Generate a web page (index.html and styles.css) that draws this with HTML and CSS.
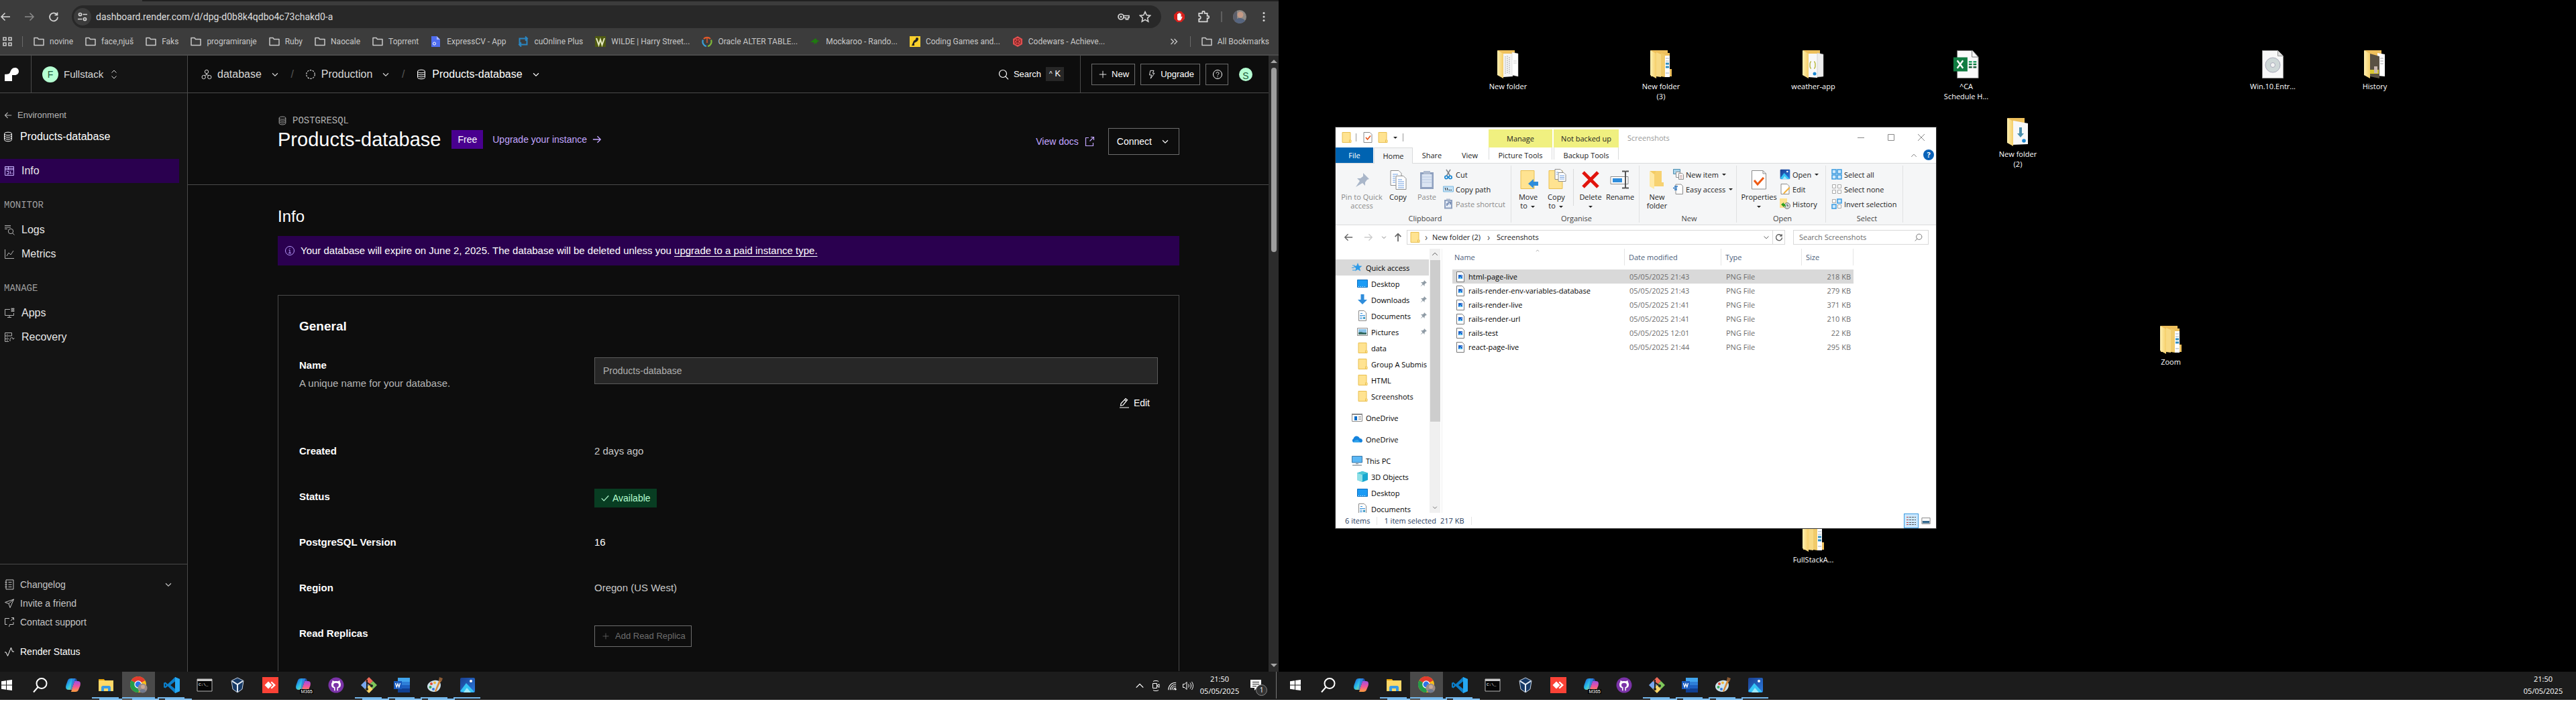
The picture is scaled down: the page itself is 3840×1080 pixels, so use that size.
FILE: index.html
```html
<!DOCTYPE html>
<html lang="en">
<head>
<meta charset="utf-8">
<title>Products-database</title>
<link rel="stylesheet" href="styles.css">
</head>
<body>
<svg class="sprite" aria-hidden="true">
  <defs>
    <linearGradient id="gCop" x1="0" y1="0" x2="1" y2="1"><stop offset="0" stop-color="#1b4fd6"/><stop offset=".5" stop-color="#2bc4e8"/><stop offset="1" stop-color="#e8d33a"/></linearGradient>
    <linearGradient id="gCop2" x1="0" y1="0" x2="0" y2="1"><stop offset="0" stop-color="#a04ee0"/><stop offset=".5" stop-color="#f0549a"/><stop offset="1" stop-color="#ffa03a"/></linearGradient>
    <linearGradient id="gFold" x1="0" y1="0" x2="1" y2="0"><stop offset="0" stop-color="#fff0b0"/><stop offset="1" stop-color="#f5cf6a"/></linearGradient>
    <linearGradient id="gSky" x1="0" y1="0" x2="1" y2="1"><stop offset="0" stop-color="#1a3f8f"/><stop offset="1" stop-color="#2b7be0"/></linearGradient>
  </defs>
  <symbol id="db" viewBox="0 0 16 16"><g fill="none" stroke="currentColor"><ellipse cx="8" cy="3.5" rx="5.5" ry="2.3"/><path d="M2.500 3.500v9c0 1.300 2.500 2.300 5.500 2.300s5.500-1 5.500-2.300v-9M2.500 6.500c0 1.300 2.500 2.300 5.500 2.300s5.500-1 5.500-2.300M2.500 9.500c0 1.300 2.500 2.300 5.500 2.300s5.500-1 5.500-2.300"/></g></symbol>
  <symbol id="chev" viewBox="0 0 16 16"><path d="M3.500 6 8 10.500 12.500 6" fill="none" stroke="currentColor" stroke-width="1.300"/></symbol>
  <symbol id="updown" viewBox="0 0 16 16"><path d="M4.500 5.500 8 2l3.500 3.500M4.500 10.500 8 14l3.500-3.500" fill="none" stroke="currentColor"/></symbol>
  <symbol id="proj" viewBox="0 0 16 16"><g fill="none" stroke="currentColor"><circle cx="8" cy="4" r="2.700"/><circle cx="3.700" cy="12" r="2.700"/><circle cx="12.300" cy="12" r="2.700"/><path d="M8 6.700v2M5 9.500l3-1 3 1"/></g></symbol>
  <symbol id="ring" viewBox="0 0 16 16"><circle cx="8" cy="8" r="6.300" fill="none" stroke="currentColor" stroke-width="1.200" stroke-dasharray="2.500 1.460"/></symbol>
  <symbol id="mag" viewBox="0 0 16 16"><path d="M10.800 10.800 15 15.300" fill="none" stroke="currentColor" stroke-width="1.200"/><circle cx="7" cy="7" r="5.500" fill="none" stroke="currentColor" stroke-width="1.200"/></symbol>
  <symbol id="plus" viewBox="0 0 16 16"><path d="M8 2v12M2 8h12" stroke="currentColor"/></symbol>
  <symbol id="bolt" viewBox="0 0 16 16"><path d="M5.500 1.500h6l-2 4.500h3l-6.500 9 1.500-6H4z" fill="none" stroke="currentColor"/></symbol>
  <symbol id="help" viewBox="0 0 16 16"><g fill="none" stroke="currentColor"><circle cx="8" cy="8" r="6.500"/><path d="M6 6.500c0-2.600 4-2.600 4 0C10 8 8 8 8 9.500M8 11v1.200"/></g></symbol>
  <symbol id="info" viewBox="0 0 16 16"><g fill="none" stroke="currentColor"><circle cx="8" cy="8" r="6.500"/><path d="M6.500 7H8v4.500M6 11.500h4M8 4v1.300"/></g></symbol>
  <symbol id="left" viewBox="0 0 16 16"><path d="M15 8H2M7.500 2.500 2 8l5.500 5.500" fill="none" stroke="currentColor" stroke-width="1.500"/></symbol>
  <symbol id="right" viewBox="0 0 16 16"><path d="M1 8h13M8.500 2.500 14 8l-5.500 5.500" fill="none" stroke="currentColor" stroke-width="1.500"/></symbol>
  <symbol id="up" viewBox="0 0 16 16"><path d="M8 15V2M3 7l5-5 5 5" fill="none" stroke="currentColor" stroke-width="2"/></symbol>
  <symbol id="reload" viewBox="0 0 16 16"><path d="M13 5A6 6 0 1 0 14 8.500M13.500 1.500V5.500h-4" fill="none" stroke="currentColor" stroke-width="1.700"/></symbol>
  <symbol id="tune" viewBox="0 0 16 16"><g fill="none" stroke="currentColor" stroke-width="1.700"><circle cx="4.500" cy="4.500" r="2"/><path d="M8.500 4.500H15M1 11.500h6.500"/><circle cx="11.500" cy="11.500" r="2"/></g></symbol>
  <symbol id="folderline" viewBox="0 0 16 16"><path d="M1 13.500v-11h5l1.500 2H15v9z" fill="none" stroke="currentColor" stroke-width="1.500" stroke-linejoin="round"/></symbol>
  <symbol id="apps4" viewBox="0 0 16 16"><path d="M2 2h4v4H2zM10 2h4v4h-4zM2 10h4v4H2zM10 10h4v4h-4z" fill="none" stroke="currentColor" stroke-width="1.600"/></symbol>
  <symbol id="key" viewBox="0 0 18 12"><g fill="none" stroke="currentColor" stroke-width="1.700"><circle cx="5" cy="6" r="4"/><path d="M9 4.500h8v3h-1.500V10h-3V7.500H9"/></g><circle cx="5" cy="6" r="1.500" fill="currentColor"/></symbol>
  <symbol id="star" viewBox="0 0 16 16"><path d="m8 1.500 2 4.400 4.800.5-3.600 3.200 1 4.700L8 11.900l-4.200 2.400 1-4.700L1.200 6.400 6 5.900z" fill="none" stroke="currentColor" stroke-width="1.400"/></symbol>
  <symbol id="hand" viewBox="0 0 16 16"><path d="M5 0h6l5 5v6l-5 5H5l-5-5V5z" fill="#d8201c"/><path d="M5 8V4h1.400v3.500V2.800h1.400v4.700V2.500h1.400v5V3.500h1.400v5.500l1-1.500 1 .5-1.800 4-1.200 1.500H6.500L5 12z" fill="#fff"/></symbol>
  <symbol id="puzzle" viewBox="0 0 16 16"><path d="M2 3.500h4.500V2a1.500 1.500 0 0 1 3 0v1.500H13V7h1a1.500 1.500 0 0 1 0 3h-1v4.500H2V11c3 0 3-4 0-4z" fill="none" stroke="currentColor" stroke-width="1.600"/></symbol>
  <symbol id="person" viewBox="0 0 20 20"><clipPath id="pc"><circle cx="10" cy="10" r="10"/></clipPath><g clip-path="url(#pc)"><path fill="#8f8a86" d="M0 0h20v20H0z"/><path fill="#5c5f6b" d="M0 0h6v20H0z"/><circle cx="11" cy="7" r="4.500" fill="#c49a86"/><path d="M2 20c0-6 4-8 8-8s9 2 9 8z" fill="#56657f"/></g></symbol>
  <symbol id="dots" viewBox="0 0 16 16"><g fill="currentColor"><circle cx="8" cy="2.500" r="1.500"/><circle cx="8" cy="8" r="1.500"/><circle cx="8" cy="13.500" r="1.500"/></g></symbol>
  <symbol id="dbl" viewBox="0 0 12 12"><path d="m1.500 2 4 4-4 4M6.500 2l4 4-4 4" fill="none" stroke="currentColor" stroke-width="1.400"/></symbol>
  <symbol id="logo" viewBox="0 0 22 20"><path d="M0 10c3-1 6 1 8-3 1.500-4 3-7 7.500-7C19 0 21 2.500 21 5.500S18.500 11 15 11h-4v9H0z" fill="#fff"/></symbol>
  <symbol id="ext" viewBox="0 0 16 16"><path d="M7 2.500H2.500v12h11V10M10 1.500h4.500V6M14.500 1.500 8.500 7.500" fill="none" stroke="currentColor" stroke-width="1.200"/></symbol>
  <symbol id="pen" viewBox="0 0 16 16"><path d="m3 9 7-7.500 2.500 2L6 11.500l-3.500.5zM8.500 3.500l2.500 2M1 15h14" fill="none" stroke="currentColor" stroke-width="1.200"/></symbol>
  <symbol id="check" viewBox="0 0 16 16"><path d="m2 8.500 4 4L14 4" fill="none" stroke="currentColor" stroke-width="1.300"/></symbol>
  <symbol id="iinfo" viewBox="0 0 16 16"><path d="M1.500 1.500h13v13h-13zM1.500 6h13M6.500 1.500V6M1.500 4h13M4 8.500h3v4H4M9.500 8.500v4M12 10.500v2" fill="none" stroke="currentColor"/></symbol>
  <symbol id="ilogs" viewBox="0 0 16 16"><path d="M1 1.500h9M1 4h9M1 6.500h4" stroke="currentColor"/><circle cx="10" cy="10" r="3.700" fill="none" stroke="currentColor"/><path d="m12.500 12.500 3 3" stroke="currentColor"/></symbol>
  <symbol id="imet" viewBox="0 0 16 16"><path d="M1.500 1v13.500H15M4 11l3-5 3 3 4-6" fill="none" stroke="currentColor"/></symbol>
  <symbol id="iapps" viewBox="0 0 16 16"><path d="M9 2.500H1.500v9h13V8M5 14.500h6M8 11.500v3M11 1h1.500v1.500H11zM13.500 1H15v1.500h-1.500zM11 4h1.500v1.500H11zM13.500 4H15v1.500h-1.500z" fill="none" stroke="currentColor"/></symbol>
  <symbol id="irec" viewBox="0 0 16 16"><path d="M7 14.500H1.500v-13h10V6h-10M1.500 10.500H7M4 4h1.500M4 8h1.500M4 12.500h1.500M9 14V11c0-3 5-3 5 0l-1.500-1M14 11l1.500-1.500" fill="none" stroke="currentColor"/></symbol>
  <symbol id="ilog" viewBox="0 0 16 16"><path d="M3 1h11v14H3zM1.500 4.500h3M1.500 8h3M1.500 11.500h3M6.500 4.500h5M6.500 8h5M6.500 11.500h5" fill="none" stroke="currentColor"/></symbol>
  <symbol id="isend" viewBox="0 0 16 16"><path d="M14.500 2 1.500 6.500l5.500 2 2 6zM7 8.500 14.500 2" fill="none" stroke="currentColor"/></symbol>
  <symbol id="isup" viewBox="0 0 16 16"><path d="M8 2.500H1.500v9h3m3 3.500 1-3.500H14V8M11 1.500h3.500V5M14.500 1.500 10 6" fill="none" stroke="currentColor"/></symbol>
  <symbol id="ipulse" viewBox="0 0 16 16"><path d="M1 9h2l2.500 5.500L10.500 2l2 6H15" fill="none" stroke="currentColor"/></symbol>

  <symbol id="tWin" viewBox="0 0 16 16"><path d="M0 2.200 7 1.200v6.300H0zM8 1l8-1v7.500H8zM0 8.500h7v6.300l-7-1zM8 8.500h8V16l-8-1z" fill="#fff"/></symbol>
  <symbol id="tMag" viewBox="0 0 24 24"><circle cx="14" cy="9.500" r="7.500" fill="none" stroke="#fff" stroke-width="2"/><path d="M8.500 15 2 22.500" stroke="#fff" stroke-width="2"/></symbol>
  <symbol id="tCop" viewBox="0 0 24 24"><path d="M9 2h6l-5 17H5c-4 0-4.500-3-3.500-7L4 5c.8-2 2-3 5-3z" fill="url(#gCop)"/><path d="M15 22H9l5-16h5c4 0 4.500 3 3.500 7L20 19c-.8 2-2 3-5 3z" fill="url(#gCop2)"/><path d="M11 2h4c2 0 2.500 2 3 4h-4L9.500 19H8z" fill="#2a6be0" opacity=".7"/></symbol>
  <symbol id="tExp" viewBox="0 0 24 24"><path d="M1 3h8l2 3H1z" fill="#e3a008"/><path d="M1 5h22v16H1z" fill="#ffd867"/><path d="M5 21v-5.500c0-1.500 1-2.500 2.500-2.500h9c1.500 0 2.500 1 2.500 2.500V21h-4v-4H9v4z" fill="#3a9be6"/></symbol>
  <symbol id="tChr" viewBox="0 0 26 26"><circle cx="12" cy="12" r="12" fill="#fbc116"/><path d="M12 12 1.600 6A12 12 0 0 1 22.400 6z" fill="#e33b2e"/><path d="M12 12 1.600 6A12 12 0 0 0 12 24l5-9z" fill="#249b4a"/><circle cx="12" cy="12" r="5.700" fill="#fff"/><circle cx="12" cy="12" r="4.400" fill="#2f74e8"/><circle cx="18.500" cy="17.500" r="7" fill="#9c8d88"/><circle cx="19" cy="15.500" r="3" fill="#c8a898"/><path d="M14 22c1-4 8-4 9.500 0-2 3-7 3-9.500 0z" fill="#70798f"/></symbol>
  <symbol id="tVsc" viewBox="0 0 24 24"><path d="M17 0 6 10.500 2.500 7.500 0 8.800v6.400l2.500 1.300L6 13.500 17 24l7-3V3z" fill="#0b7ec9"/><path d="M17 6.500v11L10 12z" fill="#1c1c1c"/><path d="M17 0l7 3v18l-7 3z" fill="#25a8f2"/><path d="M2 10v4l2-2z" fill="#1c1c1c"/></symbol>
  <symbol id="tVbx" viewBox="0 0 24 24"><path d="m12 1 9 4.500L19 18l-7 5-7-5L3 5.500z" fill="#173a66" stroke="#c9d6e6"/><path d="m4 6 8 5 8-5M12 11v11" fill="none" stroke="#e9eff6" stroke-width="2"/></symbol>
  <symbol id="tAny" viewBox="0 0 24 24"><path d="M0 0h24v24H0z" fill="#fb4236"/><path d="m9 6.500 5.500 5.500L9 17.500 3.500 12zM14 6.500l6 5.500-6 5.500-1.500-1.500 4-4-4-4z" fill="#fff"/></symbol>
  <symbol id="tGh" viewBox="0 0 24 24"><circle cx="12" cy="12" r="11.500" fill="#7b33a8"/><path d="M9 20v-3.500C6 16 4.800 14 5 11c0-1.500.5-2.500 1.200-3.200L6.500 5l3 1.200c1.500-.4 3.500-.4 5 0L17.500 5l.4 2.800C18.500 8.500 19 9.500 19 11c.2 3-1 5-4 5.500V20l-1.500.5V15h-3v5.500z" fill="#fff"/><ellipse cx="12" cy="12" rx="4" ry="3.200" fill="#7b33a8"/></symbol>
  <symbol id="tGit" viewBox="0 0 24 24"><path d="m12 0 6 6-6 6-6-6z" fill="#f06b5a"/><path d="m6 6 6 6-6 6-6-6z" fill="#79a7ee"/><path d="m18 6 6 6-6 6-6-6z" fill="#7fc65a"/><path d="m12 12 6 6-6 6-6-6z" fill="#f7d66a"/><path d="M9 4v14M9 8l7 5" stroke="#222" stroke-width="2"/><circle cx="9" cy="18" r="2" fill="#222"/><circle cx="16" cy="13" r="2" fill="#222"/></symbol>
  <symbol id="tWord" viewBox="0 0 24 24"><path d="M6 1h18v22H6z" fill="#2e7fd8"/><path d="M6 1h18v6H6z" fill="#41a5ee"/><path d="M6 12h18v5H6z" fill="#1d5fbf"/><path d="M6 17h18v6H6z" fill="#103f91"/><path d="M0 6h12v12H0z" fill="#185abd"/><path d="m2.500 9 1.700 6L6 10l1.800 5 1.700-6" fill="none" stroke="#fff" stroke-width="1.300"/></symbol>
  <symbol id="tPaint" viewBox="0 0 24 24"><path d="M11 5c6-1 10 2 10 7s-4 10-10 10S1 18 1 14 5 6 11 5z" fill="#cfe3ee"/><circle cx="7" cy="10" r="2" fill="#e04a3a"/><circle cx="12" cy="8.500" r="2" fill="#f2b53a"/><circle cx="5.500" cy="15" r="2" fill="#3aa85a"/><circle cx="10" cy="18" r="2" fill="#3a78d8"/><path d="m20 1 3 1-9 20-2-1z" fill="#d98a3a"/><path d="m19 0 5 2-2 5-4-2z" fill="#8a5a34"/></symbol>
  <symbol id="tPho" viewBox="0 0 24 24"><rect x="1" y="1" width="22" height="22" rx="2" fill="url(#gSky)"/><path d="m1 21 9-12 12 13c-1 1-20 1-21-1z" fill="#35c5f5"/><path d="m6 23 5-7 6 7z" fill="#9ee8fb"/><circle cx="17" cy="6" r="2" fill="#fff"/></symbol>
  <symbol id="sUp" viewBox="0 0 16 16"><path d="m2 11 6-6 6 6" fill="none" stroke="currentColor" stroke-width="1.500"/></symbol>
  <symbol id="sCam" viewBox="0 0 16 16"><path d="M3.500 4.500h6v7h-6zM9.500 8 13 5.500v5zM4 1.500c2-1.500 6-1.500 8 0M4 14.500c2 1.500 6 1.500 8 0" fill="none" stroke="currentColor"/></symbol>
  <symbol id="sWifi" viewBox="0 0 16 16"><path d="M2 15C2 8 7 2.500 15 2.500M5 15c0-5 4-9.500 10-9.500M8 15c0-4 3-6.500 7-6.500M11 15c0-2 1-3.500 4-3.500" fill="none" stroke="currentColor" stroke-width="1.200"/><circle cx="14" cy="14" r="1.500" fill="currentColor"/></symbol>
  <symbol id="sVol" viewBox="0 0 18 16"><path d="M1.500 5.500h2.500l3-3v11l-3-3H1.500zM9.500 5.500c1 1.500 1 3.500 0 5M12 3.500c2 3 2 6 0 9M14.500 2c2.700 4 2.700 8 0 12" fill="none" stroke="currentColor"/></symbol>
  <symbol id="sNote" viewBox="0 0 18 18"><path d="M1 1h16v12h-6l-4 4v-4H1z" fill="#fff"/><path d="M4 4.500h10M4 7.500h10M4 10.500h6" stroke="#1c1c1c"/></symbol>

  <symbol id="fold" viewBox="0 0 16 16"><path d="M2 .5h12V12h1v3.500H2z" fill="#ffe391" stroke="#e9bf50"/><path d="M12.500 11.500v4" stroke="#e9bf50"/></symbol>
  <symbol id="docChk" viewBox="0 0 16 16"><path d="M2 .5h9l3 3v12H2z" fill="#fff" stroke="#8a8a8a"/><path d="m5 8 2.500 3L12 5.500" fill="none" stroke="#e8551c" stroke-width="1.700"/></symbol>
  <symbol id="pin32" viewBox="0 0 32 32"><path d="m18 6 9 9-3 1-3 4v5l-4-4-10 6 6-9-4-4h5l4-3z" fill="#a9b6c9"/></symbol>
  <symbol id="copy32" viewBox="0 0 32 32"><g fill="#fff" stroke="#8c8c8c"><path d="M5 2.500h12l4 4v18H5z"/><path d="M13 10.500h11l4 4v16H13z"/></g><path d="M8 8h8M8 11h4M8 14h4M8 17h4M8 20h4M16 16h6M16 19h9M16 22h9M16 25h9M16 28h9" stroke="#6d9de0"/></symbol>
  <symbol id="paste32" viewBox="0 0 32 32"><path d="M6 5h20v25H6z" fill="#8ea0bf"/><path d="M8.500 8h15v19h-15z" fill="#dbe5f3"/><path d="M11 3h10v5H11z" fill="#aebbd0"/><path d="M9 12h14M9 16h14M9 20h14" stroke="#b9c9e2"/></symbol>
  <symbol id="cut" viewBox="0 0 16 16"><path d="M5 1l5.500 9M11 1 5.500 10" stroke="#7a7f86" stroke-width="1.500"/><g fill="none" stroke="#1b87d2" stroke-width="1.700"><circle cx="5" cy="12.500" r="2.200"/><circle cx="11" cy="12.500" r="2.200"/></g></symbol>
  <symbol id="path" viewBox="0 0 16 16"><path d="M.5 4h15v8H.5z" fill="#c5e3f8" stroke="#7db8de"/><path d="m3 6 1.500 4M6 6l1.500 4M9 9.500h1.500M11.500 9.500H13" stroke="#222"/></symbol>
  <symbol id="pshort" viewBox="0 0 16 16"><path d="M2 2h12v13.500H2z" fill="#8ea0bf"/><path d="M4 4h8v9.500H4z" fill="#e4ebf5"/><path d="M5 .500h6V3H5z" fill="#aebbd0"/><path d="M6 11V8h3M7 5.500h4V9" fill="none" stroke="#5f78a6" stroke-width="1.500"/></symbol>
  <symbol id="move32" viewBox="0 0 32 32"><path d="M5 2.500h20v27H5z" fill="#ffe391" stroke="#e9bf50"/><path d="M31 19v6h-7v4l-8-7 8-7v4z" fill="#2f8ddb"/></symbol>
  <symbol id="cpto32" viewBox="0 0 32 32"><path d="M5 2.500h20v27H5z" fill="#ffe391" stroke="#e9bf50"/><g fill="#fff" stroke="#8c8c8c"><path d="M14 .5h8l3 3v12H14z"/><path d="M19 5.500h8l3 3v10H19z"/></g><path d="M21 10h7M21 12.500h7M21 15h7M16 5h3M16 8h2" stroke="#6d9de0"/></symbol>
  <symbol id="del32" viewBox="0 0 32 32"><path d="M5 5 27 27M27 5 5 27" stroke="#e1140d" stroke-width="5"/></symbol>
  <symbol id="ren32" viewBox="0 0 32 32"><path d="M2 11.500h26v11H2z" fill="#fff" stroke="#8c8c8c"/><path d="M5 14h14v6H5z" fill="#2f8ddb"/><path d="M19 3.500h4c1 0 1 1 1 2v21c0 1 0 2-1 2h-4M29 3.500h-4c-1 0-1 1-1 2M29 28.500h-4c-1 0-1-1-1-2" fill="none" stroke="#555" stroke-width="2"/></symbol>
  <symbol id="new32" viewBox="0 0 32 32"><path d="M10 3h13v23H10z" fill="#f7d271"/><path d="M23 20h3v6h-3z" fill="#f7d271"/><path d="m5 4 7 3v23l-7-4z" fill="#ffe9a6"/><path d="M5 3h9v2l-2 3z" fill="#f3cb62"/></symbol>
  <symbol id="nitem" viewBox="0 0 16 16"><path d="M.5.5h10v7H.5z" fill="#a8d4ea" stroke="#4f8fb0"/><path d="M4.500 4.500h6v8h-6z" fill="#fff" stroke="#8c8c8c"/><path d="M8.500 6.500h5l2 2v7h-7z" fill="#fff" stroke="#8c8c8c"/><path d="M10 9.500h4M10 11.500h4M10 13.500h4" stroke="#c7a4a4"/></symbol>
  <symbol id="easy" viewBox="0 0 16 16"><path d="M4 1h8l2.500 2.500v12H4z" fill="#fff" stroke="#8c8c8c"/><path d="M2 4h5M0 6.500h6M2 9h4" stroke="#1b6fc2" stroke-width="1.300"/></symbol>
  <symbol id="prop32" viewBox="0 0 32 32"><path d="M5.500 2.500H22l4.500 4.500v23h-21z" fill="#fff" stroke="#8c8c8c"/><path d="M22 2.500V7h4.500" fill="none" stroke="#8c8c8c"/><path d="m9 17 5 6 9-10" fill="none" stroke="#ee5a14" stroke-width="3"/></symbol>
  <symbol id="edit" viewBox="0 0 16 16"><path d="M2 .5h9l3 3v12H2z" fill="#fff" stroke="#8a8a8a"/><path d="m6 13 8-8 1.500 1.500-8 8-2.500 1z" fill="#f3b23c"/></symbol>
  <symbol id="hist" viewBox="0 0 16 16"><path d="M0 0h11v14H0z" fill="#ffe391"/><circle cx="11" cy="11" r="4.500" fill="#d5d9dc" stroke="#777"/><path d="M11 8.500V11h2" stroke="#444" fill="none"/><path d="M2 9l4-3v2c3 0 3 3 3 6-1-2-1-3-3-3v2z" fill="#2ca01c"/></symbol>
  <symbol id="sall" viewBox="0 0 16 16"><path d="M1 1h6v6H1zM9 1h6v6H9zM1 9h6v6H1zM9 9h6v6H9z" fill="#cfe9fc" stroke="#3a9ae0" stroke-width="1.500"/></symbol>
  <symbol id="snone" viewBox="0 0 16 16"><path d="M1.500 1.500h5v5h-5zM9.500 1.500h5v5h-5zM1.500 9.500h5v5h-5zM9.500 9.500h5v5h-5z" fill="#fff" stroke="#a8a8a8"/></symbol>
  <symbol id="sinv" viewBox="0 0 16 16"><path d="M1.500 1.500h5v5h-5zM9.500 9.500h5v5h-5z" fill="#fff" stroke="#a8a8a8"/><path d="M9 1h6v6H9zM1 9h6v6H1z" fill="#cfe9fc" stroke="#3a9ae0" stroke-width="1.500"/></symbol>
  <symbol id="qa" viewBox="0 0 16 16"><path d="m9 1 1.800 4.500 4.700.3-3.600 3 1.200 4.700L9 11l-4 2.500L6.200 9 2.500 6l4.700-.5z" fill="#2e9be8"/><path d="M1 5h4M0 8.500h4M1 12h4" stroke="#2e9be8"/></symbol>
  <symbol id="desk" viewBox="0 0 16 16"><path d="M.5 2.500h15v11H.5z" fill="#1b9bf5" stroke="#0d6fc0"/><path d="M2 12.500h12" stroke="#fff" stroke-dasharray="1 2"/></symbol>
  <symbol id="down" viewBox="0 0 16 16"><path d="M5.500 0h5v8H15l-7 7-7-7h4.500z" fill="#2f8ddb"/></symbol>
  <symbol id="docs" viewBox="0 0 16 16"><path d="M2.500.5h8l3 3v12h-11z" fill="#fff" stroke="#8a8a8a"/><path d="M4 7.500h8M4 10h4M4 12.500h4M5 4.500h3" stroke="#2f8ddb"/><path d="M9 9.500h3v3.500H9z" fill="#4aa0c8"/></symbol>
  <symbol id="pics" viewBox="0 0 16 16"><path d="M.5 2.500h15v11H.5z" fill="#fff" stroke="#8a8a8a"/><path d="M2 4h12v8H2z" fill="#8cc4ea"/><path d="M2 9c4-2 7 1 12 0v3H2z" fill="#35695e"/></symbol>
  <symbol id="odapp" viewBox="0 0 16 16"><path d="M.5 2.500h15v11H.5z" fill="#fff" stroke="#8a8a8a"/><path d="M0 2h16v2H0z" fill="#8a8a8a"/><path d="M4 6h4v6H4z" fill="#0a6cc8"/><path d="M10 6.500h4M10 8.500h4M10 10.500h4" stroke="#999"/></symbol>
  <symbol id="cloud" viewBox="0 0 16 16"><path d="M3 13a3 3 0 0 1-.5-5.500C3 4 7 2 10 4.500c1 .8 1.500 1.500 2 2.500 5 0 5 6 1.500 6z" fill="#1583dc"/><path d="M3 13c-1-3 4-4 6-4l4 4z" fill="#35a5ec"/></symbol>
  <symbol id="pc16" viewBox="0 0 16 16"><path d="M.5 1.500h15v9.500H.5z" fill="#5cb8f5" stroke="#3a78a8"/><path d="M6 12.500h4M1 15h14" stroke="#8f9ba5" stroke-width="1.500"/></symbol>
  <symbol id="cube" viewBox="0 0 16 16"><path d="m8 0 8 2.500V13l-8 3-8-3V2.500z" fill="#19a8d0"/><path d="m0 2.500 8 2.500v11l-8-3z" fill="#8fe0e6"/><path d="m0 2.500L8 0l8 2.500L8 5z" fill="#4cc8d8"/></symbol>
  <symbol id="ppin" viewBox="0 0 12 12"><path d="m7 1 4 4-2 .5-1.500 2V10L5.300 7.500 1.500 10.500l3-4L2 4h2.500L6.500 3z" fill="#8f9ba5"/></symbol>
  <symbol id="png" viewBox="0 0 12 16"><path d="M.5.5h8l3 3v12H.5z" fill="#fff" stroke="#777"/><path d="M3 5h6v6H3z" fill="#1e62c8"/><path d="m3 11 3-3 3 3z" fill="#5bd0f5"/><path d="M7 6h1v1H7z" fill="#fff"/></symbol>
  <symbol id="vlist" viewBox="0 0 16 16"><path d="M1 2.500h3M1 6.500h3M1 10.500h3M1 13.500h3" stroke="#c04040"/><path d="M5 2.500h10M5 6.500h10M5 10.500h10M5 13.500h10" stroke="#555" stroke-dasharray="3 1"/></symbol>
  <symbol id="vthumb" viewBox="0 0 16 16"><path d="M1 3h14v10H1z" fill="#fff" stroke="#777"/><path d="M2 8h12v4H2z" fill="#35698e"/></symbol>

  <symbol id="dFold" viewBox="0 0 32 42"><path d="M1 0h25v36H1z" fill="#eec05c"/><path d="M9 5h14v34l-14 1z" fill="#f4f4f4"/><path d="M22 3l9 2v34l-9-2z" fill="#fff" stroke="#c9c9c9" stroke-width=".5"/><path d="M12 9v26M15 8v26M18 10v25" stroke="#aaa" stroke-dasharray="2 1"/><path d="M24 16h5M24 19h5" stroke="#ccc"/><path d="m0 0 9 5v37L0 37z" fill="url(#gFold)"/></symbol>
  <symbol id="dFold3" viewBox="0 0 32 42"><path d="M1 0h25v4h3v24h3v11H1z" fill="#eec05c"/><path d="m9 3 7 3v34l-7-1z" fill="#f8da84"/><path d="m16 4 6 2v34l-6-1z" fill="#f1cb6a"/><path d="M22 8h7v32h-7z" fill="#fff"/><path d="M23 12h5M23 16h5M23 34h5" stroke="#9ab"/><path d="M23 20h5M23 25h5" stroke="#2f8dc0" stroke-width="3"/><path d="m0 0 9 5v37L0 37z" fill="url(#gFold)"/></symbol>
  <symbol id="dFoldW" viewBox="0 0 32 42"><path d="M1 0h25v36H1z" fill="#eec05c"/><path d="M9 5h13v36l-13-1z" fill="#f8f8f8"/><path d="M22 4l9 2v33l-9 1z" fill="#eee" stroke="#bbb" stroke-width=".5"/><path d="M13 17q-2 0-2 5t2 5M17 17q2 0 2 5t-2 5" fill="none" stroke="#b8b840" stroke-width="1.500"/><circle cx="18" cy="35" r="2.500" fill="#1b87d2"/><path d="m0 0 9 5v37L0 37z" fill="url(#gFold)"/></symbol>
  <symbol id="dFold2" viewBox="0 0 32 42"><path d="M1 0h25v36H1z" fill="#eec05c"/><path d="M9 4l22 4v31l-22 1z" fill="#f8f8f8"/><path d="M18 14h4v9h3l-5 6-5-6h3z" fill="#4a8fae"/><circle cx="25" cy="34" r="2.800" fill="#1b87d2"/><path d="m0 0 9 5v37L0 37z" fill="url(#gFold)"/></symbol>
  <symbol id="dFoldH" viewBox="0 0 32 42"><path d="M1 0h25v36H1z" fill="#eec05c"/><path d="M20 4l11 2v33l-11-1z" fill="#fff"/><path d="M24 12h5M24 16h5M24 20h5" stroke="#aaa"/><path d="M9 5l14 4v33l-14-3z" fill="#5a5244"/><path d="M9 29h13v6H9z" fill="#d8c832"/><path d="M15 24h5v10h-5z" fill="#c8b8b0"/><path d="m0 0 9 5v37L0 37z" fill="url(#gFold)"/></symbol>
  <symbol id="dXls" viewBox="0 0 40 44"><path d="M6 .5h24l9 10v33H6z" fill="#fafafa" stroke="#777"/><path d="M29 .5v10h10" fill="none" stroke="#777"/><path d="M0 11h22v22H0z" fill="#107c41"/><path d="m6 16 9 12M15 16 6 28" stroke="#fff" stroke-width="2.500"/><path d="M24 18h5M31 18h5" stroke="#21a366" stroke-width="2.500"/><path d="M24 22h5M31 22h5" stroke="#107c41" stroke-width="2.500"/><path d="M24 26.500h5M31 26.500h5" stroke="#185c37" stroke-width="2.500"/></symbol>
  <symbol id="dIso" viewBox="0 0 32 42"><path d="M.5.5h23l8 8v33H.5z" fill="#f8f8f8" stroke="#999"/><path d="M23.500.5v8h8" fill="#ddd" stroke="#999"/><circle cx="16" cy="22" r="11" fill="#cfd8d8" stroke="#aab"/><circle cx="16" cy="22" r="3.500" fill="#f4f4f4" stroke="#aab"/></symbol>
</svg>

<div class="screens">
<section class="screen" aria-label="Left display">
  <div class="browser">
    <div class="tabstrip"><div class="tab"></div></div>
    <div class="toolbar">
      <button class="tool" aria-label="Back"><svg class="i16"><use href="#left"/></svg></button>
      <button class="tool dim" aria-label="Forward"><svg class="i16"><use href="#right"/></svg></button>
      <button class="tool" aria-label="Reload"><svg class="i16"><use href="#reload"/></svg></button>
      <div class="omnibox">
        <button class="site" aria-label="Site information"><svg class="i16"><use href="#tune"/></svg></button>
        <input class="url" aria-label="Address" value="dashboard.render.com/d/dpg-d0b8k4qdbo4c73chakd0-a">
        <button class="omni-btn" aria-label="Passwords"><svg class="i18"><use href="#key"/></svg></button>
        <button class="omni-btn" aria-label="Bookmark"><svg class="i18"><use href="#star"/></svg></button>
      </div>
      <button class="tool" aria-label="Ad blocker"><svg class="i16"><use href="#hand"/></svg></button>
      <button class="tool" aria-label="Extensions"><svg class="i18"><use href="#puzzle"/></svg></button>
      <span class="tool-sep"></span>
      <button class="tool" aria-label="Profile"><svg class="i20"><use href="#person"/></svg></button>
      <button class="tool" aria-label="Menu"><svg class="i16"><use href="#dots"/></svg></button>
    </div>
    <nav class="bookmarks" aria-label="Bookmarks">
      <button class="apps-btn" aria-label="Apps"><svg class="i16"><use href="#apps4"/></svg></button>
      <span class="bm-sep"></span>
      <a href="#"><svg class="i16"><use href="#folderline"/></svg>novine</a>
      <a href="#"><svg class="i16"><use href="#folderline"/></svg>face,njuš</a>
      <a href="#"><svg class="i16"><use href="#folderline"/></svg>Faks</a>
      <a href="#"><svg class="i16"><use href="#folderline"/></svg>programiranje</a>
      <a href="#"><svg class="i16"><use href="#folderline"/></svg>Ruby</a>
      <a href="#"><svg class="i16"><use href="#folderline"/></svg>Naocale</a>
      <a href="#"><svg class="i16"><use href="#folderline"/></svg>Toprrent</a>
      <a href="#"><svg class="i16" viewBox="0 0 16 16"><path d="M1 0h8l5 5v11H1z" fill="#4f6df0"/><path d="M9 0v5h5z" fill="#a9b8ff"/><circle cx="5.500" cy="11" r="2" fill="none" stroke="#fff"/></svg>ExpressCV - App</a>
      <a href="#"><svg class="i16" viewBox="0 0 16 16"><path d="M2.500 13V3.500H14M13.500 3v9.500H2M11 .5l3 3-3 3M5 15.500l-3-3 3-3" fill="none" stroke="#2a86c2" stroke-width="2"/></svg>cuOnline Plus</a>
      <a href="#"><svg class="i16" viewBox="0 0 16 16"><path d="M0 0h16v16H0z" fill="#4f5a10"/><path d="m2 3 3.500 10L8 5l2.500 8L14 3" fill="none" stroke="#e4e8c0" stroke-width="2"/></svg>WILDE | Harry Street...</a>
      <a href="#"><svg class="i16" viewBox="0 0 16 16"><g fill="none" stroke-width="2.200"><path d="M3 4a7 7 0 0 1 10 0" stroke="#e0592a"/><path d="M2 5.500A7 7 0 0 0 7 15" stroke="#3aa0d8"/><path d="M14 5.500A7 7 0 0 1 9 15" stroke="#7fb83a"/><path d="M8 1v9" stroke="#e0592a" stroke-width="1.500"/></g></svg>Oracle ALTER TABLE...</a>
      <a href="#"><svg class="i16" viewBox="0 0 16 16"><path d="M1 9 6 5l3-2 2 3 4 1-3 1-2 2 1 2-3-2-1 3-1-4-5 0z" fill="#1f7a10"/></svg>Mockaroo - Rando...</a>
      <a href="#"><svg class="i16" viewBox="0 0 16 16"><path d="M0 0h16v16H0z" fill="#f8cf2c"/><path d="m3 14 3-7 4-3 3-1-1 4-3 2-2 1v4z" fill="#222"/><circle cx="11" cy="4" r="2" fill="#222"/></svg>Coding Games and...</a>
      <a href="#"><svg class="i16" viewBox="0 0 16 16"><path d="m8 0 7 4v8l-7 4-7-4V4z" fill="#e05050"/><path d="M8 3v5M3.500 6 8 8M3.500 11 8 8M8 13V8M12.500 11 8 8M12.500 5 8 8" stroke="#7a1f1f"/><circle cx="8" cy="8" r="4.500" fill="none" stroke="#7a1f1f"/></svg>Codewars - Achieve...</a>
      <span class="grow"></span>
      <button class="more" aria-label="More bookmarks"><svg class="i12"><use href="#dbl"/></svg></button>
      <span class="bm-sep"></span>
      <a href="#"><svg class="i16"><use href="#folderline"/></svg>All Bookmarks</a>
    </nav>
    <div class="viewport">
      <div class="app">
        <header class="topbar">
          <a class="brand" href="#" aria-label="Render"><svg class="logo"><use href="#logo"/></svg></a>
          <button class="workspace"><span class="avatar a24">F</span>Fullstack<svg class="i16"><use href="#updown"/></svg></button>
          <nav class="crumbs" aria-label="Breadcrumb">
            <button class="crumb"><svg class="i16"><use href="#proj"/></svg><span>database</span><svg class="i14"><use href="#chev"/></svg></button>
            <span class="slash">/</span>
            <button class="crumb"><svg class="i16"><use href="#ring"/></svg><span>Production</span><svg class="i14"><use href="#chev"/></svg></button>
            <span class="slash">/</span>
            <button class="crumb here"><svg class="i16"><use href="#db"/></svg><span>Products-database</span><svg class="i14"><use href="#chev"/></svg></button>
          </nav>
          <button class="search"><svg class="i16"><use href="#mag"/></svg>Search <kbd><small>^</small> K</kbd></button>
          <div class="actions">
            <button class="btn sm"><svg class="i14"><use href="#plus"/></svg>New</button>
            <button class="btn sm"><svg class="i14"><use href="#bolt"/></svg>Upgrade</button>
            <button class="btn sm sq" aria-label="Help"><svg class="i16"><use href="#help"/></svg></button>
            <span class="avatar a20">S</span>
          </div>
        </header>
        <div class="columns">
          <aside class="sidebar">
            <a class="backlink" href="#"><svg class="i12"><use href="#left"/></svg>Environment</a>
            <div class="service"><svg class="i16"><use href="#db"/></svg>Products-database</div>
            <nav class="menu">
              <a class="item active" href="#"><svg class="i16"><use href="#iinfo"/></svg>Info</a>
              <h2>MONITOR</h2>
              <a class="item" href="#"><svg class="i16"><use href="#ilogs"/></svg>Logs</a>
              <a class="item" href="#"><svg class="i16"><use href="#imet"/></svg>Metrics</a>
              <h2>MANAGE</h2>
              <a class="item" href="#"><svg class="i16"><use href="#iapps"/></svg>Apps</a>
              <a class="item" href="#"><svg class="i16"><use href="#irec"/></svg>Recovery</a>
            </nav>
            <div class="side-foot">
              <button class="foot"><svg class="i16"><use href="#ilog"/></svg>Changelog<svg class="i14 end"><use href="#chev"/></svg></button>
              <a class="foot" href="#"><svg class="i16"><use href="#isend"/></svg>Invite a friend</a>
              <a class="foot" href="#"><svg class="i16"><use href="#isup"/></svg>Contact support</a>
              <a class="foot status-link" href="#"><svg class="i16"><use href="#ipulse"/></svg>Render Status</a>
            </div>
          </aside>
          <main class="main">
            <div class="page-head">
              <div>
                <div class="kind"><svg class="i14"><use href="#db"/></svg>POSTGRESQL</div>
                <div class="title-row"><h1>Products-database</h1><span class="plan">Free</span><a class="violet" href="#">Upgrade your instance<svg class="i14"><use href="#right"/></svg></a></div>
              </div>
              <div class="head-actions"><a class="violet" href="#">View docs<svg class="i16"><use href="#ext"/></svg></a><button class="btn lg">Connect<svg class="i14"><use href="#chev"/></svg></button></div>
            </div>
            <div class="content">
              <h2 class="section-title">Info</h2>
              <div class="banner"><svg class="i16"><use href="#info"/></svg><p>Your database will expire on June 2, 2025. The database will be deleted unless you <a href="#">upgrade to a paid instance type.</a></p></div>
              <section class="card">
                <h3>General</h3>
                <div class="field name-field">
                  <div><label for="dbname">Name</label><p class="hint">A unique name for your database.</p></div>
                  <div class="name-side"><input id="dbname" class="text" value="Products-database" readonly><button class="edit"><svg class="i16"><use href="#pen"/></svg>Edit</button></div>
                </div>
                <div class="field"><span class="k">Created</span><span class="v">2 days ago</span></div>
                <div class="field"><span class="k">Status</span><span class="v"><span class="ok"><svg class="i14"><use href="#check"/></svg>Available</span></span></div>
                <div class="field"><span class="k">PostgreSQL Version</span><span class="v bright">16</span></div>
                <div class="field"><span class="k">Region</span><span class="v">Oregon (US West)</span></div>
                <div class="field"><span class="k">Read Replicas</span><span class="v"><button class="btn sm off" disabled><svg class="i12"><use href="#plus"/></svg>Add Read Replica</button></span></div>
              </section>
            </div>
          </main>
        </div>
      </div>
      <div class="scroll dark-scroll"><span class="arr up-arr"></span><span class="thumb"></span><span class="arr down-arr"></span></div>
    </div>
  </div>
  <div class="taskbar left-bar">
    <button class="task start" aria-label="Start"><svg class="i16"><use href="#tWin"/></svg></button>
    <button class="task" aria-label="Search"><svg class="i24"><use href="#tMag"/></svg></button>
    <button class="task" aria-label="Copilot"><svg class="i24"><use href="#tCop"/></svg></button>
    <button class="task run many" aria-label="File Explorer"><svg class="i24"><use href="#tExp"/></svg></button>
    <button class="task run many on" aria-label="Chrome"><svg class="i26"><use href="#tChr"/></svg></button>
    <button class="task run many" aria-label="Visual Studio Code"><svg class="i24"><use href="#tVsc"/></svg></button>
    <button class="task" aria-label="Command Prompt"><svg class="i24" viewBox="0 0 24 24"><path d="M1 3h22v18H1z" fill="#050505" stroke="#b8b8b8"/><path d="M1 3h22v3H1z" fill="#c8c8c8"/><text class="prompt" x="3" y="13">C:\_</text></svg></button>
    <button class="task" aria-label="VirtualBox"><svg class="i24"><use href="#tVbx"/></svg></button>
    <button class="task" aria-label="AnyDesk"><svg class="i24"><use href="#tAny"/></svg></button>
    <button class="task" aria-label="Microsoft 365"><svg class="i24"><use href="#tCop"/></svg><span class="m365">M365</span></button>
    <button class="task" aria-label="GitHub Desktop"><svg class="i24"><use href="#tGh"/></svg></button>
    <button class="task run many" aria-label="Git"><svg class="i24"><use href="#tGit"/></svg></button>
    <button class="task run many" aria-label="Word"><svg class="i24"><use href="#tWord"/></svg></button>
    <button class="task run many" aria-label="Paint"><svg class="i24"><use href="#tPaint"/></svg></button>
    <button class="task run" aria-label="Photos"><svg class="i24"><use href="#tPho"/></svg></button>
    <span class="grow"></span>
    <button class="tray" aria-label="Hidden icons"><svg class="i14"><use href="#sUp"/></svg></button>
    <button class="tray" aria-label="Meet now"><svg class="i16"><use href="#sCam"/></svg></button>
    <button class="tray" aria-label="Network"><svg class="i14"><use href="#sWifi"/></svg></button>
    <button class="tray" aria-label="Volume"><svg class="i18"><use href="#sVol"/></svg></button>
    <div class="clock">21:50<br>05/05/2025</div>
    <button class="notify" aria-label="Notifications"><svg class="i18"><use href="#sNote"/></svg><span class="badge">1</span></button>
    <span class="peek"></span>
  </div>
</section>

<section class="screen" aria-label="Right display">
  <div class="desktop">
    <div class="shortcut" style="left:305px;top:75px"><svg><use href="#dFold"/></svg>New folder</div>
    <div class="shortcut" style="left:533px;top:75px"><svg><use href="#dFold3"/></svg>New folder<br>(3)</div>
    <div class="shortcut" style="left:760px;top:75px"><svg><use href="#dFoldW"/></svg>weather-app</div>
    <div class="shortcut" style="left:988px;top:75px"><svg><use href="#dXls"/></svg>^CA<br>Schedule H...</div>
    <div class="shortcut" style="left:1065px;top:176px"><svg><use href="#dFold2"/></svg>New folder<br>(2)</div>
    <div class="shortcut" style="left:1445px;top:75px"><svg><use href="#dIso"/></svg>Win.10.Entr...</div>
    <div class="shortcut" style="left:1597px;top:75px"><svg><use href="#dFoldH"/></svg>History</div>
    <div class="shortcut" style="left:1293px;top:486px"><svg><use href="#dFold3"/></svg>Zoom</div>
    <div class="shortcut" style="left:760px;top:781px"><svg><use href="#dFold3"/></svg>FullStackA...</div>

    <div class="window">
      <div class="titlebar">
        <div class="quick">
          <svg class="i16"><use href="#fold"/></svg><i></i><svg class="i16"><use href="#docChk"/></svg><svg class="i16"><use href="#fold"/></svg><span class="tri"></span><i></i>
        </div>
        <div class="ctx">Manage</div><div class="ctx">Not backed up</div>
        <div class="wtitle">Screenshots</div>
        <button class="wbtn" aria-label="Minimise"><svg class="i12" viewBox="0 0 12 12"><path d="M1 6.500h10" stroke="#888"/></svg></button>
        <button class="wbtn" aria-label="Maximise"><svg class="i12" viewBox="0 0 12 12"><path d="M1.500 1.500h9v9h-9z" fill="none" stroke="#888"/></svg></button>
        <button class="wbtn" aria-label="Close"><svg class="i12" viewBox="0 0 12 12"><path d="m1 1 10 10M11 1 1 11" stroke="#888"/></svg></button>
      </div>
      <div class="tabs">
        <button class="wtab file">File</button><button class="wtab home">Home</button><button class="wtab share">Share</button><button class="wtab view">View</button>
        <button class="wtab tools t1">Picture Tools</button><button class="wtab tools t2">Backup Tools</button>
        <span class="grow"></span>
        <button class="collapse" aria-label="Collapse ribbon"><svg class="i10"><use href="#sUp"/></svg></button>
        <button class="qmark" aria-label="Help">?</button>
      </div>
      <div class="ribbon">
        <div class="group g1"><div class="gbody">
          <button class="big w66 off"><svg class="i32"><use href="#pin32"/></svg>Pin to Quick access</button>
          <button class="big w42"><svg class="i32"><use href="#copy32"/></svg>Copy</button>
          <button class="big w44 off"><svg class="i32"><use href="#paste32"/></svg>Paste</button>
          <div class="smalls"><button><svg class="i16"><use href="#cut"/></svg>Cut</button><button><svg class="i16"><use href="#path"/></svg>Copy path</button><button class="off"><svg class="i16"><use href="#pshort"/></svg>Paste shortcut</button></div>
        </div><div class="glabel">Clipboard</div></div>
        <div class="group g2"><div class="gbody">
          <button class="big w42"><svg class="i32"><use href="#move32"/></svg>Move<span>to <b class="tri"></b></span></button>
          <button class="big w42"><svg class="i32"><use href="#cpto32"/></svg>Copy<span>to <b class="tri"></b></span></button>
          <span class="gsep"></span>
          <button class="big w42"><svg class="i32"><use href="#del32"/></svg>Delete<span><b class="tri"></b></span></button>
          <button class="big w46"><svg class="i32"><use href="#ren32"/></svg>Rename</button>
        </div><div class="glabel">Organise</div></div>
        <div class="group g3"><div class="gbody">
          <button class="big w44"><svg class="i32"><use href="#new32"/></svg>New folder</button>
          <div class="smalls"><button><svg class="i16"><use href="#nitem"/></svg>New item <b class="tri"></b></button><button><svg class="i16"><use href="#easy"/></svg>Easy access <b class="tri"></b></button></div>
        </div><div class="glabel">New</div></div>
        <div class="group g4"><div class="gbody">
          <button class="big w58"><svg class="i32"><use href="#prop32"/></svg>Properties<span><b class="tri"></b></span></button>
          <div class="smalls"><button><svg class="i16"><use href="#tPho"/></svg>Open <b class="tri"></b></button><button><svg class="i16"><use href="#edit"/></svg>Edit</button><button><svg class="i16"><use href="#hist"/></svg>History</button></div>
        </div><div class="glabel">Open</div></div>
        <div class="group g5"><div class="gbody">
          <div class="smalls"><button><svg class="i16"><use href="#sall"/></svg>Select all</button><button><svg class="i16"><use href="#snone"/></svg>Select none</button><button><svg class="i16"><use href="#sinv"/></svg>Invert selection</button></div>
        </div><div class="glabel">Select</div></div>
      </div>
      <div class="addrrow">
        <button class="nav" aria-label="Back"><svg class="i14"><use href="#left"/></svg></button>
        <button class="nav faint" aria-label="Forward"><svg class="i14"><use href="#right"/></svg></button>
        <button class="nav slim" aria-label="Recent"><svg class="i10"><use href="#chev"/></svg></button>
        <button class="nav slim2" aria-label="Up"><svg class="i14"><use href="#up"/></svg></button>
        <div class="addr"><svg class="i16"><use href="#fold"/></svg><span class="gt">›</span><span>New folder (2)</span><span class="gt">›</span><span>Screenshots</span><span class="grow"></span><button aria-label="Previous locations"><svg class="i12"><use href="#chev"/></svg></button><button class="refresh" aria-label="Refresh"><svg class="i12"><use href="#reload"/></svg></button></div>
        <div class="find"><input aria-label="Search Screenshots" placeholder="Search Screenshots"><svg class="i12 flip"><use href="#mag"/></svg></div>
      </div>
      <div class="panes">
        <nav class="tree" aria-label="Folders">
          <a href="#" class="root sel"><svg class="i16"><use href="#qa"/></svg>Quick access</a>
          <a href="#"><svg class="i16"><use href="#desk"/></svg>Desktop<svg class="i12 end"><use href="#ppin"/></svg></a>
          <a href="#"><svg class="i16"><use href="#down"/></svg>Downloads<svg class="i12 end"><use href="#ppin"/></svg></a>
          <a href="#"><svg class="i16"><use href="#docs"/></svg>Documents<svg class="i12 end"><use href="#ppin"/></svg></a>
          <a href="#"><svg class="i16"><use href="#pics"/></svg>Pictures<svg class="i12 end"><use href="#ppin"/></svg></a>
          <a href="#"><svg class="i16"><use href="#fold"/></svg>data</a>
          <a href="#"><svg class="i16"><use href="#fold"/></svg>Group A Submis</a>
          <a href="#"><svg class="i16"><use href="#fold"/></svg>HTML</a>
          <a href="#"><svg class="i16"><use href="#fold"/></svg>Screenshots</a>
          <a href="#" class="root gap"><svg class="i16"><use href="#odapp"/></svg>OneDrive</a>
          <a href="#" class="root gap"><svg class="i16"><use href="#cloud"/></svg>OneDrive</a>
          <a href="#" class="root gap"><svg class="i16"><use href="#pc16"/></svg>This PC</a>
          <a href="#"><svg class="i16"><use href="#cube"/></svg>3D Objects</a>
          <a href="#"><svg class="i16"><use href="#desk"/></svg>Desktop</a>
          <a href="#"><svg class="i16"><use href="#docs"/></svg>Documents</a>
        </nav>
        <div class="scroll light-scroll"><svg class="i10"><use href="#sUp"/></svg><span class="thumb"></span><svg class="i10"><use href="#chev"/></svg></div>
        <div class="list">
          <table>
            <colgroup><col class="c1"><col class="c2"><col class="c3"><col class="c4"></colgroup>
            <thead><tr><th>Name<svg class="sort"><use href="#sUp"/></svg></th><th>Date modified</th><th>Type</th><th>Size</th></tr></thead>
            <tbody>
              <tr class="sel"><td><svg><use href="#png"/></svg>html-page-live</td><td>05/05/2025 21:43</td><td>PNG File</td><td>218 KB</td></tr>
              <tr><td><svg><use href="#png"/></svg>rails-render-env-variables-database</td><td>05/05/2025 21:43</td><td>PNG File</td><td>279 KB</td></tr>
              <tr><td><svg><use href="#png"/></svg>rails-render-live</td><td>05/05/2025 21:41</td><td>PNG File</td><td>371 KB</td></tr>
              <tr><td><svg><use href="#png"/></svg>rails-render-url</td><td>05/05/2025 21:41</td><td>PNG File</td><td>210 KB</td></tr>
              <tr><td><svg><use href="#png"/></svg>rails-test</td><td>05/05/2025 12:01</td><td>PNG File</td><td>22 KB</td></tr>
              <tr><td><svg><use href="#png"/></svg>react-page-live</td><td>05/05/2025 21:44</td><td>PNG File</td><td>295 KB</td></tr>
            </tbody>
          </table>
        </div>
      </div>
      <div class="statusbar"><span>6 items</span><i></i><span>1 item selected</span><span class="kb">217 KB</span><i></i><span class="grow"></span><button class="vw on" aria-label="Details"><svg class="i16"><use href="#vlist"/></svg></button><button class="vw" aria-label="Large icons"><svg class="i14"><use href="#vthumb"/></svg></button></div>
    </div>
  </div>
  <div class="taskbar">
    <button class="task" aria-label="Start"><svg class="i16"><use href="#tWin"/></svg></button>
    <button class="task" aria-label="Search"><svg class="i24"><use href="#tMag"/></svg></button>
    <button class="task" aria-label="Copilot"><svg class="i24"><use href="#tCop"/></svg></button>
    <button class="task run many" aria-label="File Explorer"><svg class="i24"><use href="#tExp"/></svg></button>
    <button class="task run many on" aria-label="Chrome"><svg class="i26"><use href="#tChr"/></svg></button>
    <button class="task run many" aria-label="Visual Studio Code"><svg class="i24"><use href="#tVsc"/></svg></button>
    <button class="task" aria-label="Command Prompt"><svg class="i24" viewBox="0 0 24 24"><path d="M1 3h22v18H1z" fill="#050505" stroke="#b8b8b8"/><path d="M1 3h22v3H1z" fill="#c8c8c8"/><text class="prompt" x="3" y="13">C:\_</text></svg></button>
    <button class="task" aria-label="VirtualBox"><svg class="i24"><use href="#tVbx"/></svg></button>
    <button class="task" aria-label="AnyDesk"><svg class="i24"><use href="#tAny"/></svg></button>
    <button class="task" aria-label="Microsoft 365"><svg class="i24"><use href="#tCop"/></svg><span class="m365">M365</span></button>
    <button class="task" aria-label="GitHub Desktop"><svg class="i24"><use href="#tGh"/></svg></button>
    <button class="task run many" aria-label="Git"><svg class="i24"><use href="#tGit"/></svg></button>
    <button class="task run many" aria-label="Word"><svg class="i24"><use href="#tWord"/></svg></button>
    <button class="task run many" aria-label="Paint"><svg class="i24"><use href="#tPaint"/></svg></button>
    <button class="task run" aria-label="Photos"><svg class="i24"><use href="#tPho"/></svg></button>
    <span class="grow"></span>
    <div class="clock right-clock">21:50<br>05/05/2025</div>
  </div>
</section>
</div>
</body>
</html>
```
FILE: styles.css
```css
* { box-sizing: border-box; }
body { margin: 0; background: #fff; font: 15px/24px "Liberation Sans", Arial, sans-serif; }
button { font: inherit; color: inherit; background: none; border: 0; padding: 0; margin: 0; }
input { font: inherit; min-width: 0; outline: 0; }
a { color: inherit; text-decoration: none; }
h1, h2, h3, p { margin: 0; font-weight: 400; }
svg { flex: none; display: block; }
.sprite { position: absolute; width: 0; height: 0; }
.grow { flex: 1; }
.end { margin-left: auto; }
.i10 { width: 10px; height: 10px; }
.i12 { width: 12px; height: 12px; }
.i14 { width: 14px; height: 14px; }
.i16 { width: 16px; height: 16px; }
.i18 { width: 18px; height: 18px; }
.i20 { width: 20px; height: 20px; }
.i24 { width: 24px; height: 24px; }
.i26 { width: 26px; height: 26px; }
.i32 { width: 32px; height: 32px; }

.screens { display: grid; grid-template-columns: 1906fr 1934fr; height: calc(100vh - 36px); }
.screen { display: flex; flex-direction: column; min-width: 0; min-height: 0; background: #000; }

/* Browser chrome */
.browser { flex: 1; min-height: 0; display: flex; flex-direction: column; background: #3c3c3c; color: #d6d6d6; }
.tabstrip { height: 2px; background: #202020; }
.tab { width: 212px; height: 2px; background: #3c3c3c; }
.toolbar { height: 46px; display: flex; align-items: center; margin-left: -10px; padding-right: 4px; }
.tool { width: 36px; height: 36px; display: grid; place-items: center; }
.dim { color: #8a8a8a; }
.tool-sep { width: 2px; height: 16px; margin: 0 8px; background: #5f5f5f; }
.omnibox { flex: 1; height: 34px; margin: 0 9px; padding: 0 14px 0 3px; display: flex; align-items: center; border-radius: 17px; background: #282828; }
.site { width: 26px; height: 26px; border-radius: 50%; background: #3c3c3c; display: grid; place-items: center; }
.url { flex: 1; border: 0; padding: 0 0 0 7px; background: none; color: #dedede; font: 14px/20px Roboto, sans-serif; }
.omni-btn { width: 32px; display: grid; place-items: center; }
.omni-btn:last-child { width: 20px; margin-left: 6px; }
.bookmarks { height: 35px; padding: 0 14px 6px 3px; display: flex; align-items: center; gap: 18px; border-bottom: 2px solid #4a4a4a; font: 12px/16px Roboto, sans-serif; color: #c8c8c8; white-space: nowrap; overflow: hidden; }
.bookmarks a { display: flex; align-items: center; gap: 8px; }
.apps-btn { margin-right: -4px; }
.bm-sep { width: 1px; height: 16px; background: #6a6a6a; margin-right: -2px; }

/* Dashboard */
.viewport { flex: 1; min-height: 0; display: flex; background: #0d0d0d; color: #fff; }
.app { flex: 1; min-width: 0; display: flex; flex-direction: column; }
.topbar { height: 56px; display: flex; align-items: center; border-bottom: 1px solid #4a4a4a; font-size: 15px; color: #d8d8d8; }
.brand { width: 47px; height: 55px; padding-left: 7px; display: flex; align-items: center; background: #141414; border-right: 1px solid #4a4a4a; }
.logo { width: 22px; height: 20px; }
.workspace { width: 233px; height: 55px; padding-left: 16px; display: flex; align-items: center; gap: 8px; background: #141414; border-right: 1px solid #4a4a4a; }
.avatar { display: grid; place-items: center; border-radius: 50%; background: #b5ffd2; color: #1c5b3c; }
.a24 { width: 24px; height: 24px; font-size: 14px; }
.a20 { width: 20px; height: 20px; font-size: 14px; margin-left: 8px; }
.crumbs { flex: 1; display: flex; align-items: center; padding-left: 20px; font-size: 16px; }
.crumb { display: flex; align-items: center; gap: 8px; }
.crumb svg:last-child { margin-left: 5px; }
.crumb.here { color: #fff; }
.slash { width: 38px; text-align: center; color: #555; }
.search { display: flex; align-items: center; gap: 7px; padding-right: 24px; font-size: 13px; color: #fff; }
.search kbd { padding: 0 5px; background: #272727; font: 13px/20px "Liberation Sans", Arial, sans-serif; }
.search small { font-size: 10px; }
.actions { height: 55px; padding: 0 24px 0 16px; display: flex; align-items: center; gap: 8px; border-left: 1px solid #4a4a4a; }
.btn { display: flex; align-items: center; border: 1px solid #6d6d6d; font-size: 14px; color: #fff; }
.sm { height: 32px; padding: 0 8px 0 9px; gap: 6px; font-size: 13px; }
.sq { width: 34px; }
.lg { height: 40px; padding: 0 13px 0 12px; gap: 13px; }
.columns { flex: 1; min-height: 0; display: flex; }
.sidebar { width: 280px; display: flex; flex-direction: column; padding-top: 23px; background: #141414; border-right: 1px solid #4a4a4a; }
.backlink { display: flex; align-items: center; gap: 8px; padding-left: 6px; font-size: 13px; line-height: 20px; color: #b5b5b5; }
.service { display: flex; align-items: center; gap: 10px; margin: 10px 0 21px; padding-left: 4px; font-size: 16px; line-height: 24px; }
.menu h2 { margin: 23px 0 9px; padding-left: 6px; font: 14px/20px "Liberation Mono", monospace; color: #9d9d9d; }
.item { display: flex; align-items: center; gap: 10px; height: 36px; padding-left: 6px; font-size: 16px; color: #e6e6e6; }
.item svg { color: #b0b0b0; }
.active { width: 267px; background: #2a004f; }
.active svg { color: #c9b5ff; }
.side-foot { margin-top: auto; padding: 16px 0; border-top: 1px solid #4a4a4a; }
.foot { display: flex; align-items: center; gap: 8px; width: 100%; height: 28px; padding: 0 21px 0 6px; font-size: 14px; color: #c4c4c4; }
.status-link { margin-top: 16px; color: #fff; }
.main { flex: 1; min-width: 0; overflow: hidden; }
.page-head { height: 137px; padding: 31px 133px 0 134px; display: flex; justify-content: space-between; align-items: flex-start; border-bottom: 1px solid #4a4a4a; }
.kind { display: flex; align-items: center; gap: 8px; font: 14px/20px "Liberation Mono", monospace; color: #b0b0b0; }
.title-row { display: flex; align-items: center; height: 36px; }
.title-row h1 { font-size: 29px; line-height: 36px; }
.plan { margin: 0 14px 0 16px; padding: 0 9px; height: 28px; line-height: 28px; font-size: 14px; background: #49008f; }
.violet { display: flex; align-items: center; gap: 8px; font-size: 14px; color: #c2a5ff; }
.head-actions { margin-top: 21px; display: flex; gap: 20px; }
.content { padding: 32px 133px 0 134px; }
.section-title { font-size: 24px; line-height: 30px; }
.banner { margin: 14px 0 44px; height: 44px; padding: 0 10px; display: flex; align-items: center; gap: 8px; background: #2a004f; }
.banner svg { color: #b99cff; }
.banner a { text-decoration: underline; text-underline-offset: 3px; }
.card { border: 1px solid #4a4a4a; border-bottom: 0; padding: 34px 31px 0; }
.card h3 { font-size: 19px; font-weight: 700; line-height: 24px; margin-bottom: 34px; }
.field { display: grid; grid-template-columns: 440px 1fr; align-items: start; min-height: 68px; }
.name-field { margin-bottom: 48px; }
.k, .field label { font-weight: 700; display: block; }
.v { color: #c8c8c8; }
.bright { color: #fff; }
.hint { color: #b5b5b5; margin-top: 3px; }
.name-side { display: flex; flex-direction: column; align-items: flex-end; gap: 16px; }
.text { width: 100%; height: 40px; padding: 0 12px; font-size: 14px; color: #b0b0b0; background: #272727; border: 1px solid #5a5a5a; border-radius: 0; }
.edit { display: flex; align-items: center; gap: 6px; margin-right: 12px; font-size: 14px; line-height: 24px; }
.ok { display: flex; width: fit-content; align-items: center; gap: 4px; height: 28px; padding: 0 9px; background: #083d22; color: #b5ffd2; font-size: 14px; }
.off.btn { color: #6d6d6d; gap: 8px; padding: 0 8px 0 10px; }

.scroll { display: flex; flex-direction: column; align-items: center; }
.dark-scroll { width: 15px; background: #2c2c2c; padding: 6px 0 7px; }
.dark-scroll .thumb { width: 8px; height: 275px; margin: 7px 0 auto; border-radius: 4px; background: #9d9d9d; }
.arr { width: 0; height: 0; border: 5px solid transparent; }
.up-arr { border-top: 0; border-bottom: 5px solid #a6a6a6; }
.down-arr { border-bottom: 0; border-top: 5px solid #a6a6a6; }

/* Taskbar */
.taskbar { height: 42px; display: flex; align-items: stretch; background: #1c1c1c; color: #fff; font: 11px/18px "Open Sans", sans-serif; }
.task { position: relative; width: 49px; display: grid; place-items: center; padding-bottom: 2px; }
.start { width: 35px; padding-right: 15px; }
.on { background: #4a4a4a; }
.run::before { content: ""; position: absolute; left: 4px; right: 5px; bottom: 2px; height: 2px; background: #76b9ed; }
.on::before { left: 0; right: 0; }
.many::after { content: ""; position: absolute; left: 15px; right: -6px; bottom: 0; height: 2px; background: #76b9ed; }
.prompt { fill: #fff; font: 6px "Liberation Mono", monospace; }
.m365 { position: absolute; right: 9px; bottom: 9px; padding: 0 1px; background: #000; font: 7px/7px "Liberation Sans", Arial, sans-serif; }
.tray { width: 24px; display: grid; place-items: center; }
.clock { width: 66px; margin-left: 2px; padding-top: 2px; text-align: center; }
.right-clock { margin-right: 16px; }
.notify { position: relative; width: 42px; display: grid; place-items: center; padding-bottom: 3px; }
.badge { position: absolute; left: 21px; top: 19px; width: 17px; height: 17px; border-radius: 50%; border: 1px solid #888; background: #333; font-size: 10px; line-height: 15px; }
.peek { width: 1px; margin: 0 3px 2px 9px; background: #777; }

/* Desktop */
.desktop { position: relative; flex: 1; min-height: 0; overflow: hidden; }
.shortcut { position: absolute; width: 74px; text-align: center; color: #fff; font: 11px/15px "Open Sans", sans-serif; }
.shortcut svg { width: 40px; height: 42px; margin: 0 auto 4px; }
.window { position: absolute; left: 84px; top: 189px; width: 897px; border: 1px solid #333; background: #fff; color: #222; font: 11px/13px "Open Sans", sans-serif; }
.titlebar { height: 30px; display: flex; align-items: center; }
.quick { width: 228px; padding-left: 8px; display: flex; align-items: center; gap: 6px; }
.quick i { width: 1px; height: 12px; background: #999; }
.quick i:first-of-type { margin-right: 3px; }
.tri { display: inline-block; width: 0; height: 0; border: 3px solid transparent; border-top-color: #222; border-bottom: 0; vertical-align: middle; margin: 0 2px; }
.ctx { width: 95px; height: 27px; margin: 3px 2px 0 0; text-align: center; line-height: 28px; background: #f0f080; }
.ctx + .ctx { width: 97px; }
.wtitle { flex: 1; padding-left: 11px; color: #999; }
.wbtn { width: 45px; height: 29px; display: grid; place-items: center; }
.tabs { height: 24px; display: flex; align-items: stretch; border-bottom: 1px solid #dadbdc; }
.wtab { padding: 0; }
.file { width: 56px; background: #0063b1; color: #fff; }
.home { width: 58px; margin: 0 0 -1px 1px; border: 1px solid #dadbdc; border-bottom: 0; background: #f5f6f7; }
.share { width: 57px; }
.view { width: 56px; }
.tools { border: solid #dadbdc; border-width: 0 1px; margin-bottom: 5px; padding-top: 4px; }
.t1 { width: 95px; }
.t2 { width: 97px; margin-left: 2px; }
.collapse { width: 20px; display: grid; place-items: center; color: #777; }
.qmark { width: 16px; height: 16px; margin: 3px 3px 0 4px; border-radius: 50%; background: #0a62b8; color: #fff; font-weight: 700; line-height: 16px; }
.ribbon { height: 92px; display: flex; background: #f5f6f7; border-bottom: 1px solid #dadbdc; }
.group { display: flex; flex-direction: column; margin: 3px 0; border-right: 1px solid #e0e1e2; }
.g1 { width: 262px; padding-left: 6px; }
.g2 { width: 191px; padding-left: 4px; }
.g3 { width: 145px; padding-left: 4px; }
.g4 { width: 133px; padding-left: 4px; }
.g5 { width: 115px; padding-left: 8px; }
.gbody { display: flex; align-items: flex-start; height: 72px; }
.gsep { width: 1px; height: 55px; margin: 5px 4px 0; background: #dadbdc; }
.glabel { text-align: center; color: #444; }
.big { display: flex; flex-direction: column; align-items: center; padding-top: 5px; text-align: center; }
.big svg { margin-bottom: 3px; }
.big.off, .smalls .off { color: #8a8a8a; }
.big.off + .smalls, .big + .smalls { margin-left: 2px; }
.w42 { width: 42px; }
.w44 { width: 44px; }
.w46 { width: 46px; }
.w58 { width: 58px; }
.w66 { width: 66px; }
.smalls { display: flex; flex-direction: column; padding-top: 2px; }
.smalls button { height: 22px; display: flex; align-items: center; gap: 3px; white-space: nowrap; }
.addrrow { height: 35px; display: flex; align-items: center; }
.nav { width: 30px; height: 22px; display: grid; place-items: center; color: #666; }
.nav:first-child { margin-left: 4px; }
.faint { color: #ccc; }
.slim { width: 16px; }
.slim2 { width: 26px; }
.addr { width: 564px; height: 22px; display: flex; align-items: center; padding-left: 3px; border: 1px solid #d9d9d9; }
.addr button { width: 18px; height: 20px; display: grid; place-items: center; color: #555; }
.addr .refresh { border-left: 1px solid #d9d9d9; }
.gt { width: 18px; text-align: center; font-size: 14px; color: #555; }
.addr .gt ~ .gt { width: 24px; }
.find { width: 202px; height: 22px; margin-left: 12px; padding: 0 8px; display: flex; align-items: center; border: 1px solid #d9d9d9; color: #666; }
.find input { flex: 1; border: 0; padding: 0; }
.find input::placeholder { color: #6d6d6d; opacity: 1; }
.flip { transform: scaleX(-1); }
.panes { display: flex; height: 394px; }
.tree { width: 140px; padding-top: 16px; overflow: hidden; color: #000; white-space: nowrap; }
.tree a { display: flex; align-items: center; gap: 5px; height: 24px; padding: 0 3px 0 32px; }
.tree .root { padding-left: 24px; }
.tree .sel { width: 139px; background: #d9d9d9; }
.tree .gap { margin-top: 8px; }
.light-scroll { width: 16px; padding: 3px 0; background: #f0f0f0; color: #555; }
.light-scroll .thumb { width: 15px; height: 241px; margin: 4px 0 auto; background: #cdcdcd; }
.list { flex: 1; margin-left: 2px; padding-left: 15px; border-left: 1px solid #f0f0f0; }
table { width: 598px; table-layout: fixed; border-spacing: 0; color: #6d6d6d; }
.c1 { width: 257px; }
.c2 { width: 144px; }
.c3 { width: 120px; }
.c4 { width: 77px; }
th { position: relative; height: 25px; padding: 0 0 0 6px; text-align: left; font-weight: 400; color: #4c607a; border-right: 1px solid #e5e5e5; }
th:first-child { padding-left: 3px; }
.sort { position: absolute; left: 122px; top: 0; width: 10px; height: 6px; color: #777; }
tbody::before { content: ""; display: block; height: 6px; }
td { height: 21px; padding: 0 0 0 7px; }
td:first-child { display: flex; align-items: center; gap: 6px; padding-left: 6px; color: #000; }
td:first-child svg { width: 12px; height: 16px; }
td:last-child { text-align: right; padding-right: 4px; }
tr.sel td { background: #d9d9d9; }
.statusbar { height: 23px; padding: 0 4px 0 14px; display: flex; align-items: center; gap: 10px; color: #1e395b; }
.statusbar i { width: 1px; height: 12px; background: #e5e5e5; }
.kb { margin-left: -4px; }
.vw { width: 22px; height: 22px; display: grid; place-items: center; }
.vw.on { margin-right: -10px; background: #cce8ff; border: 1px solid #3a9ae0; }
```
